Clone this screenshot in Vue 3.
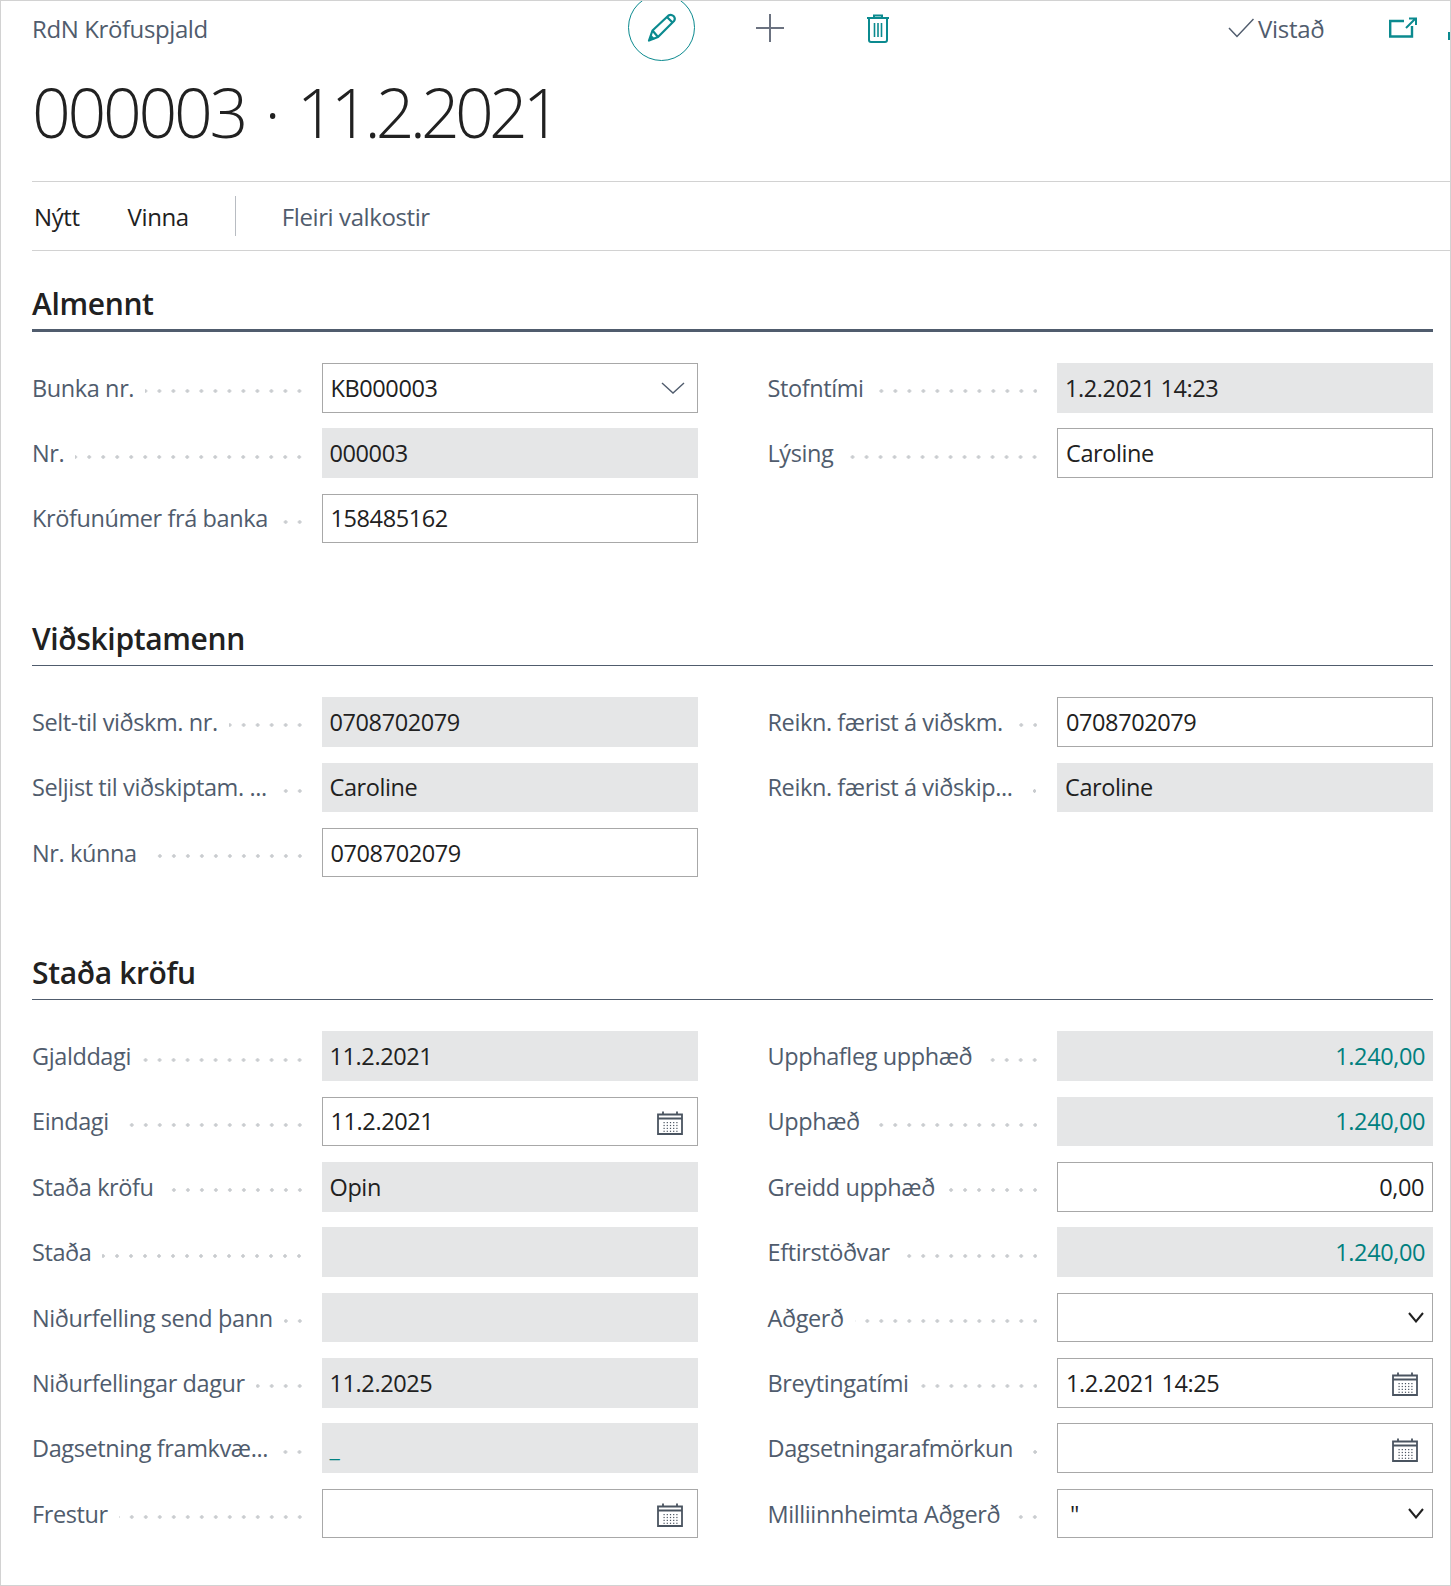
<script setup>
const sections = [
  {
    title: 'Almennt',
    thick: true,
    left: [
      { label: 'Bunka nr.', value: 'KB000003', icon: 'thin' },
      { label: 'Nr.', value: '000003', ro: true },
      { label: 'Kröfunúmer frá banka', value: '158485162' },
    ],
    right: [
      { label: 'Stofntími', value: '1.2.2021 14:23', ro: true },
      { label: 'Lýsing', value: 'Caroline' },
    ],
  },
  {
    title: 'Viðskiptamenn',
    left: [
      { label: 'Selt-til viðskm. nr.', value: '0708702079', ro: true },
      { label: 'Seljist til viðskiptam. ...', value: 'Caroline', ro: true },
      { label: 'Nr. kúnna', value: '0708702079' },
    ],
    right: [
      { label: 'Reikn. færist á viðskm.', value: '0708702079' },
      { label: 'Reikn. færist á viðskip...', value: 'Caroline', ro: true },
    ],
  },
  {
    title: 'Staða kröfu',
    left: [
      { label: 'Gjalddagi', value: '11.2.2021', ro: true },
      { label: 'Eindagi', value: '11.2.2021', icon: 'date' },
      { label: 'Staða kröfu', value: 'Opin', ro: true },
      { label: 'Staða', value: '', ro: true },
      { label: 'Niðurfelling send þann', value: '', ro: true },
      { label: 'Niðurfellingar dagur', value: '11.2.2025', ro: true },
      { label: 'Dagsetning framkvæ...', value: '_', ro: true, teal: true },
      { label: 'Frestur', value: '', icon: 'date' },
    ],
    right: [
      { label: 'Upphafleg upphæð', value: '1.240,00', ro: true, teal: true, num: true },
      { label: 'Upphæð', value: '1.240,00', ro: true, teal: true, num: true },
      { label: 'Greidd upphæð', value: '0,00', num: true },
      { label: 'Eftirstöðvar', value: '1.240,00', ro: true, teal: true, num: true },
      { label: 'Aðgerð', value: '', icon: 'chev' },
      { label: 'Breytingatími', value: '1.2.2021 14:25', icon: 'date' },
      { label: 'Dagsetningarafmörkun', value: '', icon: 'date' },
      { label: 'Milliinnheimta Aðgerð', value: '"', icon: 'chev', quote: true },
    ],
  },
]
const calendarDots = []
for (let r = 0; r < 4; r++) for (let c = 0; c < 5; c++) calendarDots.push({ x: 6.5 + c * 3.2, y: 11 + r * 2.9 })
</script>

<template>
  <div class="page">
    <header class="topbar">
      <span class="crumb">RdN Kröfuspjald</span>
      <button class="circle" aria-label="Breyta">
        <svg width="30" height="29" viewBox="0 0 30 29" fill="none" stroke="#0b8a8f" stroke-width="2.2" stroke-linejoin="round">
          <path d="M2 27.5 L5.5 17.5 L21.5 2.5 Q24 0.8 26.5 3 Q28.8 5.5 27 8 L11 24 Z" />
          <path d="M5.5 17.5 L11 24 M20 4 L25.5 9.5" />
          <path d="M2 27.5 L8 26 L4 21.5 Z" fill="#0b8a8f" stroke="none" />
        </svg>
      </button>
      <svg class="ico plus" width="30" height="30" viewBox="0 0 30 30" stroke="#6b7280" stroke-width="2">
        <path d="M15 1 V29 M1 15 H29" />
      </svg>
      <svg class="ico trash" width="24" height="29" viewBox="0 0 24 29" fill="none" stroke="#0b8a8f" stroke-width="2">
        <path d="M1 4 H23 M8 4 V1.5 H16 V4" />
        <path d="M3 4 V26 Q3 28 5 28 H19 Q21 28 21 26 V4" />
        <path d="M8.5 9 V23 M12 9 V23 M15.5 9 V23" stroke-width="1.6" />
      </svg>
      <svg class="ico check" width="26" height="20" viewBox="0 0 26 20" fill="none" stroke="#505c6d" stroke-width="1.5">
        <path d="M1 10 L9 18.5 L25.5 1" />
      </svg>
      <span class="saved">Vistað</span>
      <svg class="ico popout" width="28" height="21" viewBox="0 0 28 21" fill="none" stroke="#0b8a8f" stroke-width="2.4">
        <path d="M15 4 H1.2 V19.5 H23 V9" />
        <path d="M17 11 L26 2 M20 1.5 H27 V8" stroke-width="2" />
      </svg>
      <span class="clipped"></span>
    </header>

    <h1 class="title"><span>000003</span> · <span class="title-date">11.2.2021</span></h1>

    <nav class="actions">
      <span class="act dark nyt">Nýtt</span>
      <span class="act dark vinna">Vinna</span>
      <span class="sep"></span>
      <span class="act more">Fleiri valkostir</span>
    </nav>

    <section v-for="(s, i) in sections" :key="s.title" class="section" :class="{ first: i === 0 }">
      <h2 class="heading" :class="{ thick: s.thick }">{{ s.title }}</h2>
      <div class="cols">
        <div v-for="side in ['left', 'right']" :key="side" class="col">
          <div v-for="f in s[side]" :key="f.label" class="row">
            <div class="lab">
              <span class="lab-text">{{ f.label }}</span>
              <span class="leader"></span>
            </div>
            <div class="box" :class="{ ro: f.ro, edit: !f.ro, num: f.num, teal: f.teal }">
              <span class="val" :class="{ quote: f.quote }">{{ f.value }}</span>
              <svg v-if="f.icon === 'thin'" class="chev-thin" width="24" height="12" viewBox="0 0 24 12" fill="none" stroke="#505c6d" stroke-width="1.4">
                <path d="M1 1 L12 11 L23 1" />
              </svg>
              <svg v-else-if="f.icon === 'chev'" class="chev" width="16" height="11" viewBox="0 0 16 11" fill="none" stroke="#212121" stroke-width="2">
                <path d="M1 1 L8 9.5 L15 1" />
              </svg>
              <svg v-else-if="f.icon === 'date'" class="cal" width="26" height="24" viewBox="0 0 26 24" fill="none" stroke="#4a5460" stroke-width="1.8">
                <path d="M1 3.5 H25 V23 H1 Z" />
                <path d="M1 7.5 H25" stroke-width="2" />
                <path d="M6 0.5 V4 M20 0.5 V4" />
                <rect v-for="(d, k) in calendarDots" :key="k" :x="d.x" :y="d.y" width="1.2" height="1.2" fill="#4a5460" stroke="none" />
              </svg>
            </div>
          </div>
        </div>
      </div>
    </section>
  </div>
</template>

<style>
html, body { margin: 0; background: #fff; }
</style>

<style scoped>
.page {
  box-sizing: border-box;
  width: 1451px;
  height: 1586px;
  border: 1px solid #d2d2d2;
  overflow: hidden;
  position: relative;
  background: #fff;
  font-family: "Open Sans", "Noto Sans", sans-serif;
  color: #212121;
}
.topbar {
  display: flex;
  align-items: center;
  height: 54px;
  padding-left: 31px;
  position: relative;
}
.crumb { font-size: 24px; color: #505c6d; width: 596px; letter-spacing: -0.4px; }
.circle {
  box-sizing: border-box;
  width: 67px;
  height: 67px;
  flex: none;
  margin-top: -1px;
  border: 1.3px solid #0b8a8f;
  border-radius: 50%;
  background: #fff;
  padding: 0;
  display: flex;
  align-items: center;
  justify-content: center;
}
.ico { flex: none; }
.plus { margin-left: 60px; }
.trash { margin-left: 81px; }
.check { margin-left: 338px; }
.saved { font-size: 24px; color: #505c6d; margin-left: 4px; letter-spacing: -0.3px; }
.popout { margin: -2px 0 0 65px; }
.clipped {
  position: absolute;
  right: 0;
  top: 31px;
  width: 2px;
  height: 8px;
  background: #0b8a8f;
}
.title {
  margin: 12px 0 0 31px;
  font-size: 68px;
  line-height: 90px;
  font-weight: 300;
  letter-spacing: -3.3px;
  word-spacing: 5px;
  color: #212121;
  height: 114px;
  white-space: nowrap;
}
.title-date { letter-spacing: -4.9px; }
.actions {
  display: flex;
  align-items: center;
  margin-left: 31px;
  height: 68px;
  border-top: 1px solid #d2d2d2;
  border-bottom: 1px solid #d2d2d2;
  font-size: 24px;
  letter-spacing: -0.4px;
}
.act { white-space: nowrap; }
.dark { color: #212121; }
.nyt { margin-left: 2px; }
.vinna { margin-left: 48px; }
.sep { width: 1px; height: 40px; background: #b8bcc2; margin-left: 46px; }
.more { color: #505c6d; margin-left: 46px; }

.section { margin: 75px 17px 0 31px; }
.section.first { margin-top: 32px; }
.heading {
  margin: 0;
  font-size: 30px;
  line-height: 42px;
  font-weight: 600;
  letter-spacing: -0.35px;
  color: #212121;
  padding-bottom: 5px;
  border-bottom: 1px solid #505c6d;
}
.heading.thick { padding-bottom: 4px; border-bottom-width: 3px; }
.cols {
  display: grid;
  grid-template-columns: 1fr 1fr;
  column-gap: 70px;
  margin-top: 31px;
}
.col { display: flex; flex-direction: column; gap: 15.85px; }
.row { display: flex; height: 49.5px; }
.lab {
  width: 289.5px;
  flex: none;
  display: flex;
  align-items: center;
  padding-right: 20px;
  box-sizing: border-box;
}
.lab-text { font-size: 23.5px; color: #505c6d; white-space: nowrap; letter-spacing: -0.4px; }
.leader {
  flex: 1;
  min-width: 0;
  height: 4px;
  margin: 7px 0 0 11px;
  background-image: radial-gradient(circle at 12px 2px, #c9cccf 1.5px, transparent 1.9px);
  background-size: 14px 4px;
  background-repeat: repeat-x;
  background-position: right center;
}
.box {
  flex: 1;
  min-width: 0;
  box-sizing: border-box;
  display: flex;
  align-items: center;
  padding: 0 8px;
  font-size: 23.5px;
  letter-spacing: -0.4px;
  position: relative;
}
.val { flex: 1; min-width: 0; white-space: nowrap; }
.quote { padding-left: 4px; }
.ro { background: #e5e6e7; }
.edit { background: #fff; border: 1px solid #a8a8a8; }
.num .val { text-align: right; }
.teal { color: #00807f; }
.chev-thin { margin-right: 4px; flex: none; }
.chev { flex: none; }
.cal { margin: 3px 6px 0 0; flex: none; }
</style>
